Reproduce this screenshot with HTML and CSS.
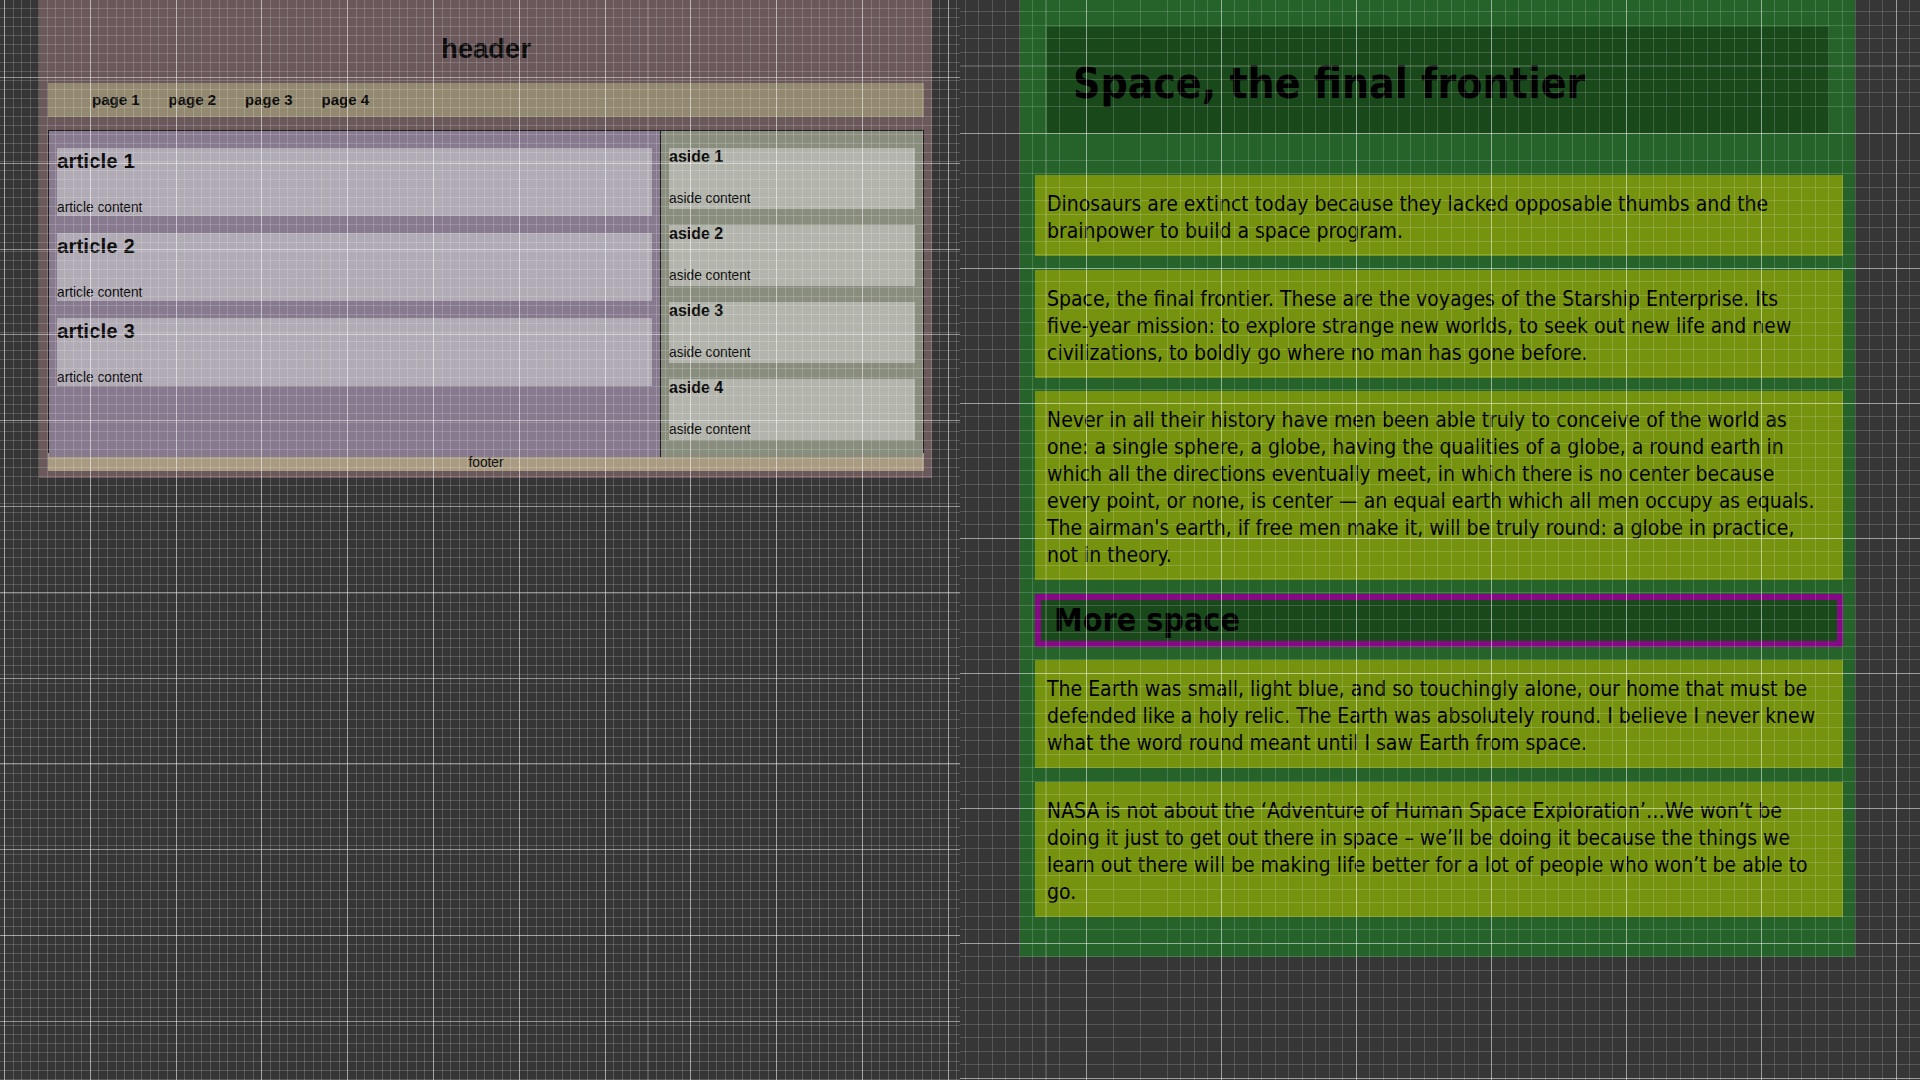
FILE: index.html
```html
<!DOCTYPE html>
<html lang="en">
<head>
<meta charset="utf-8">
<title>Layout demos</title>
<link rel="stylesheet" href="styles.css">
</head>
<body>
<div class="screen">
  <section class="pane pane-left">
    <div class="site">
      <header class="site-header"><h1>header</h1></header>
      <nav class="site-nav">
        <a>page 1</a>
        <a>page 2</a>
        <a>page 3</a>
        <a>page 4</a>
      </nav>
      <div class="site-main">
        <div class="articles">
          <article class="card"><h2>article 1</h2><p>article content</p></article>
          <article class="card"><h2>article 2</h2><p>article content</p></article>
          <article class="card"><h2>article 3</h2><p>article content</p></article>
        </div>
        <aside class="asides">
          <section class="side"><h3>aside 1</h3><p>aside content</p></section>
          <section class="side"><h3>aside 2</h3><p>aside content</p></section>
          <section class="side"><h3>aside 3</h3><p>aside content</p></section>
          <section class="side"><h3>aside 4</h3><p>aside content</p></section>
        </aside>
      </div>
      <footer class="site-footer">footer</footer>
    </div>
  </section>
  <section class="pane pane-right">
    <div class="space">
      <header class="space-header"><h1>Space, the final frontier</h1></header>
      <p class="block">Dinosaurs are extinct today because they lacked opposable thumbs and the<br>brainpower to build a space program.</p>
      <p class="block">Space, the final frontier. These are the voyages of the Starship Enterprise. Its<br>five-year mission: to explore strange new worlds, to seek out new life and new<br>civilizations, to boldly go where no man has gone before.</p>
      <p class="block">Never in all their history have men been able truly to conceive of the world as<br>one: a single sphere, a globe, having the qualities of a globe, a round earth in<br>which all the directions eventually meet, in which there is no center because<br>every point, or none, is center — an equal earth which all men occupy as equals.<br>The airman's earth, if free men make it, will be truly round: a globe in practice,<br>not in theory.</p>
      <h2 class="block-title">More space</h2>
      <p class="block">The Earth was small, light blue, and so touchingly alone, our home that must be<br>defended like a holy relic. The Earth was absolutely round. I believe I never knew<br>what the word round meant until I saw Earth from space.</p>
      <p class="block">NASA is not about the ‘Adventure of Human Space Exploration’…We won’t be<br>doing it just to get out there in space – we’ll be doing it because the things we<br>learn out there will be making life better for a lot of people who won’t be able to<br>go.</p>
    </div>
  </section>
</div>
</body>
</html>
```

FILE: styles.css
```css
html, body {
  margin: 0;
  padding: 0;
  width: 1920px;
  height: 1080px;
  overflow: hidden;
  background: #353535;
}

.screen {
  display: grid;
  grid-template-columns: 960px 960px;
  height: 1080px;
}

.pane {
  position: relative;
  height: 1080px;
  overflow: hidden;
  background: #363636;
}

.pane::after {
  content: "";
  position: absolute;
  inset: 0;
  pointer-events: none;
}

.pane-left::after {
  background-image:
    repeating-linear-gradient(90deg, transparent 0 4px, rgba(255,255,255,0.45) 4px 5px, transparent 5px 85.8px),
    repeating-linear-gradient(180deg, transparent 0 77px, rgba(255,255,255,0.45) 77px 78px, transparent 78px 85.8px),
    repeating-linear-gradient(90deg, transparent 0 4px, rgba(255,255,255,0.17) 4px 5px, transparent 5px 8.58px),
    repeating-linear-gradient(180deg, transparent 0 8px, rgba(255,255,255,0.17) 8px 9px, transparent 9px 8.58px);
}

.pane-right::after {
  background-image:
    repeating-linear-gradient(90deg, transparent 0 126px, rgba(255,255,255,0.42) 126px 127px, transparent 127px 135px),
    repeating-linear-gradient(180deg, transparent 0 133px, rgba(255,255,255,0.42) 133px 134px, transparent 134px 135px),
    repeating-linear-gradient(90deg, transparent 0 4.5px, rgba(255,255,255,0.16) 4.5px 5.5px, transparent 5.5px 13.5px),
    repeating-linear-gradient(180deg, transparent 0 11.5px, rgba(255,255,255,0.16) 11.5px 12.5px, transparent 12.5px 13.5px);
}

/* ---------- left demo ---------- */
.site {
  margin-left: 39px;
  width: 893px;
  box-sizing: border-box;
  padding: 0 8px 7px 9px;
  background: #6a585b;
  font-family: "Liberation Sans", Arial, sans-serif;
  color: #0c0c0c;
}

.site-header {
  height: 83px;
  box-sizing: border-box;
  padding-top: 33px;
}

.site-header h1 {
  margin: 0;
  font-size: 27.5px;
  font-weight: bold;
  text-align: center;
  line-height: normal;
}

.site-nav {
  height: 34px;
  background: #938970;
  display: flex;
  align-items: center;
  gap: 29px;
  padding-left: 44px;
  font-size: 15px;
  font-weight: bold;
  line-height: 17px;
  padding-bottom: 2px;
  box-sizing: border-box;
}

.site-main {
  margin-top: 13px;
  height: 323px;
  box-sizing: border-box;
  border: 1px solid #1e1e1e;
  display: grid;
  grid-template-columns: 612px 1fr;
}

.articles {
  background: #877a8f;
  border-right: 1px solid #1e1e1e;
  padding: 17px 8px;
  display: flex;
  flex-direction: column;
  gap: 17px;
}

.card {
  background: #b1abb5;
  height: 68px;
}

.card h2 {
  margin: 0 0 28px;
  font-size: 20.6px;
  line-height: 25px;
  font-weight: bold;
}

.card p, .side p {
  margin: 0;
  font-size: 13.73px;
  line-height: 16px;
}

.card p {
  margin-top: -1px;
}

.asides {
  background: #898d7e;
  padding: 17px 8px;
  display: flex;
  flex-direction: column;
  gap: 16px;
}

.side {
  background: #b3b5ac;
  height: 61px;
}

.side h3 {
  margin: 0 0 25px;
  font-size: 16px;
  line-height: 18px;
  font-weight: bold;
}

.site-footer {
  height: 18px;
  line-height: 19px;
  background: #a89b82;
  text-align: center;
  font-size: 13.73px;
}

/* ---------- right demo ---------- */
.space {
  margin-left: 60px;
  width: 835px;
  box-sizing: border-box;
  padding: 27px 12px 40px 15px;
  background: #26632a;
  font-family: "DejaVu Sans Condensed", "DejaVu Sans", sans-serif;
  font-stretch: condensed;
  color: #000;
}

.space-header {
  margin: 0 14px 42px 12px;
  height: 106px;
  box-sizing: border-box;
  padding: 32px 0 0 26px;
  background: #19481b;
}

.space-header h1 {
  margin: 0;
  font-size: 42.3px;
  font-weight: bold;
  line-height: normal;
}

.block {
  margin: 0 0 13.5px;
  padding: 16px 12px 11px;
  background: #76930f;
  font-size: 21px;
  line-height: 27px;
  white-space: nowrap;
}

.block:last-child {
  margin-bottom: 0;
}

.block-title {
  margin: 0 0 13.5px;
  height: 53px;
  box-sizing: border-box;
  border: 6px solid #850985;
  background: #19481b;
  padding-left: 13px;
  font-size: 32px;
  font-weight: bold;
  line-height: 41px;
}
```
